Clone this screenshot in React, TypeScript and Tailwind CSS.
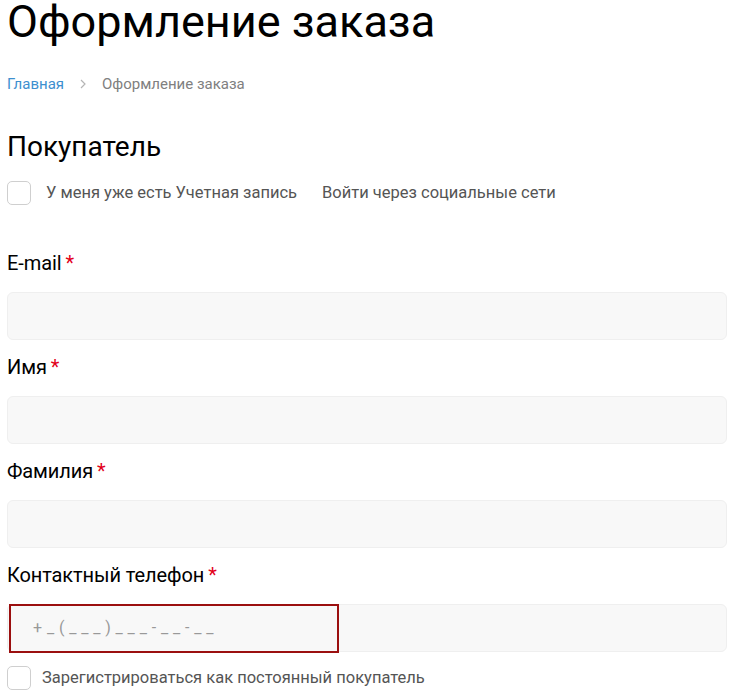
import React from 'react';

const font = { fontFamily: 'Roboto, "Noto Sans", sans-serif' };

function Label({ text }: { text: string }) {
  return (
    <div className="h-[26px] text-[20px] leading-[26px] tracking-[-0.1px] text-black">
      {text}
      <span className="ml-[4px] text-[#e2001a]">*</span>
    </div>
  );
}

function Field({ label }: { label: string }) {
  return (
    <div>
      <Label text={label} />
      <div className="mt-[16px] h-[48px] rounded-[6px] border border-[#efefef] bg-[#f8f8f8]" />
    </div>
  );
}

function Checkbox() {
  return <span className="inline-block h-[24px] w-[24px] shrink-0 rounded-[5px] border border-[#cfcfcf] bg-white" />;
}

export default function App() {
  return (
    <div className="min-h-[692px] bg-white pl-[7px] pr-[13px]" style={font}>
      <h1 className="-mt-[6px] text-[45px] font-normal leading-[56px] text-black">Оформление заказа</h1>

      {/* breadcrumbs */}
      <div className="mt-[24px] flex items-center text-[15px] leading-[20px]">
        <a className="text-[#3d8fcf]">Главная</a>
        <svg className="mx-[13px] h-[12px] w-[12px]" viewBox="0 0 12 12" fill="none" stroke="#b5b5b5" strokeWidth="1.2">
          <path d="M4 2l4 4-4 4" />
        </svg>
        <span className="text-[#808080]">Оформление заказа</span>
      </div>

      <h2 className="mt-[35px] text-[28px] font-normal leading-[36px] text-black">Покупатель</h2>

      <div className="mt-[16px] flex items-center text-[16.5px] text-[#555]">
        <Checkbox />
        <span className="ml-[15px]">У меня уже есть Учетная запись</span>
        <span className="ml-[25px]">Войти через социальные сети</span>
      </div>

      <div className="mt-[44px] flex flex-col gap-[14px]">
        <Field label="E-mail" />
        <Field label="Имя" />
        <Field label="Фамилия" />
        <div>
          <Label text="Контактный телефон" />
          <div className="mt-[16px] h-[48px] rounded-[6px] border border-[#efefef] bg-[#f8f8f8] pl-[1px]">
            <div className="-mt-px flex h-[49px] w-[330px] items-center border-2 border-[#9b0f0f] pl-[22px] text-[16px] tracking-[4.8px] text-[#999]">
              +_(___)___-__-__
            </div>
          </div>
        </div>
      </div>

      <div className="mt-[14px] flex items-center text-[16.5px] text-[#555]">
        <Checkbox />
        <span className="ml-[11px]">Зарегистрироваться как постоянный покупатель</span>
      </div>
    </div>
  );
}
